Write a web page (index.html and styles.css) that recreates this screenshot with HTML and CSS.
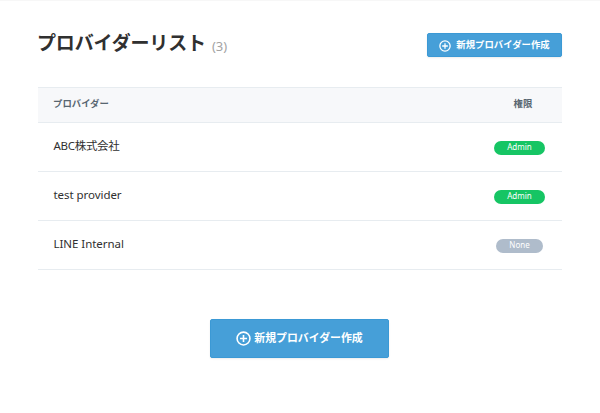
FILE: index.html
```html
<!DOCTYPE html>
<html lang="ja">
<head>
<meta charset="utf-8">
<title>プロバイダーリスト</title>
<link rel="stylesheet" href="styles.css">
</head>
<body>
<main class="page">
  <header class="page-header">
    <h1 class="title">プロバイダーリスト</h1>
    <span class="count">(3)</span>
    <button class="btn btn-small">
      <svg class="icon" viewBox="0 0 14 14"><circle cx="7" cy="7" r="6"/><path d="M7 3.7v6.6M3.7 7h6.6"/></svg>
      <span>新規プロバイダー作成</span>
    </button>
  </header>
  <section class="table">
    <div class="row head"><span class="label">プロバイダー</span><span class="role">権限</span></div>
    <div class="row"><span class="name cjk">ABC株式会社</span><span class="role"><span class="badge admin">Admin</span></span></div>
    <div class="row"><span class="name">test provider</span><span class="role"><span class="badge admin">Admin</span></span></div>
    <div class="row"><span class="name">LINE Internal</span><span class="role"><span class="badge none">None</span></span></div>
  </section>
  <button class="btn btn-large">
    <svg class="icon" viewBox="0 0 14 14"><circle cx="7" cy="7" r="6"/><path d="M7 3.7v6.6M3.7 7h6.6"/></svg>
    <span>新規プロバイダー作成</span>
  </button>
</main>
</body>
</html>
```
FILE: styles.css
```css
* { box-sizing: border-box; }
body {
  margin: 0;
  background: #fff;
  color: #303030;
  font-family: "Noto Sans", "Noto Sans CJK JP", sans-serif;
}
.page {
  height: 413px;
  padding: 32px 38px 0;
  border-top: 1px solid #f7f7f7;
  display: flex;
  flex-direction: column;
}
.page-header { display: flex; height: 24px; align-items: center; }
.title {
  margin: 0 0 6px -1px;
  font-size: 19px;
  line-height: 24px;
  font-weight: 700;
  letter-spacing: -0.15px;
  font-family: "Noto Sans CJK JP", sans-serif;
  white-space: nowrap;
}
.count { margin: 1px 0 0 6px; font-size: 13px; line-height: 16px; color: #a3a3a3; }
.btn {
  display: flex;
  align-items: center;
  justify-content: center;
  padding: 0;
  border: 1px solid #3b99d5;
  border-radius: 2px;
  background: #469fd8;
  color: #fff;
  font-family: "Noto Sans CJK JP", sans-serif;
  font-weight: 700;
  white-space: nowrap;
  box-shadow: 0 1px 2px #ededed;
}
.btn span { margin-bottom: 2px; }
.btn-small { margin-left: auto; width: 135px; height: 24px; gap: 5px; font-size: 9.4px; }
.btn-large { align-self: center; margin: 49px 1px 0 0; width: 179px; height: 39px; gap: 3px; font-size: 10.9px; }
.icon { flex: none; fill: none; stroke: #fff; stroke-width: 1.5; }
.btn-small .icon { width: 12px; height: 12px; margin-top: 1px; }
.btn-large .icon { width: 15px; height: 15px; }
.btn-large span { margin-bottom: 4px; }
.table { margin-top: 30px; border-top: 1px solid #e7ecf0; }
.row {
  display: flex;
  justify-content: space-between;
  align-items: center;
  height: 49px;
  padding: 0 3.5px 2px 15px;
  border-bottom: 1px solid #e7ecf0;
}
.head { height: 35px; padding: 0 0 4px 15px; background: #f7f8fa; color: #586670; font-size: 9.4px; font-weight: 700; }
.name { margin-left: 0.5px; font-size: 11.5px; line-height: 18px; letter-spacing: -0.05px; }
.cjk { letter-spacing: -0.3px; }
.role { width: 78px; display: flex; justify-content: center; }
.badge {
  width: 51px;
  height: 14px;
  margin-top: 4px;
  border-radius: 7px;
  color: #fff;
  font-size: 8px;
  line-height: 11px;
  text-align: center;
}
.admin { background: #16c564; }
.none { width: 47px; background: #afbccb; }
```
